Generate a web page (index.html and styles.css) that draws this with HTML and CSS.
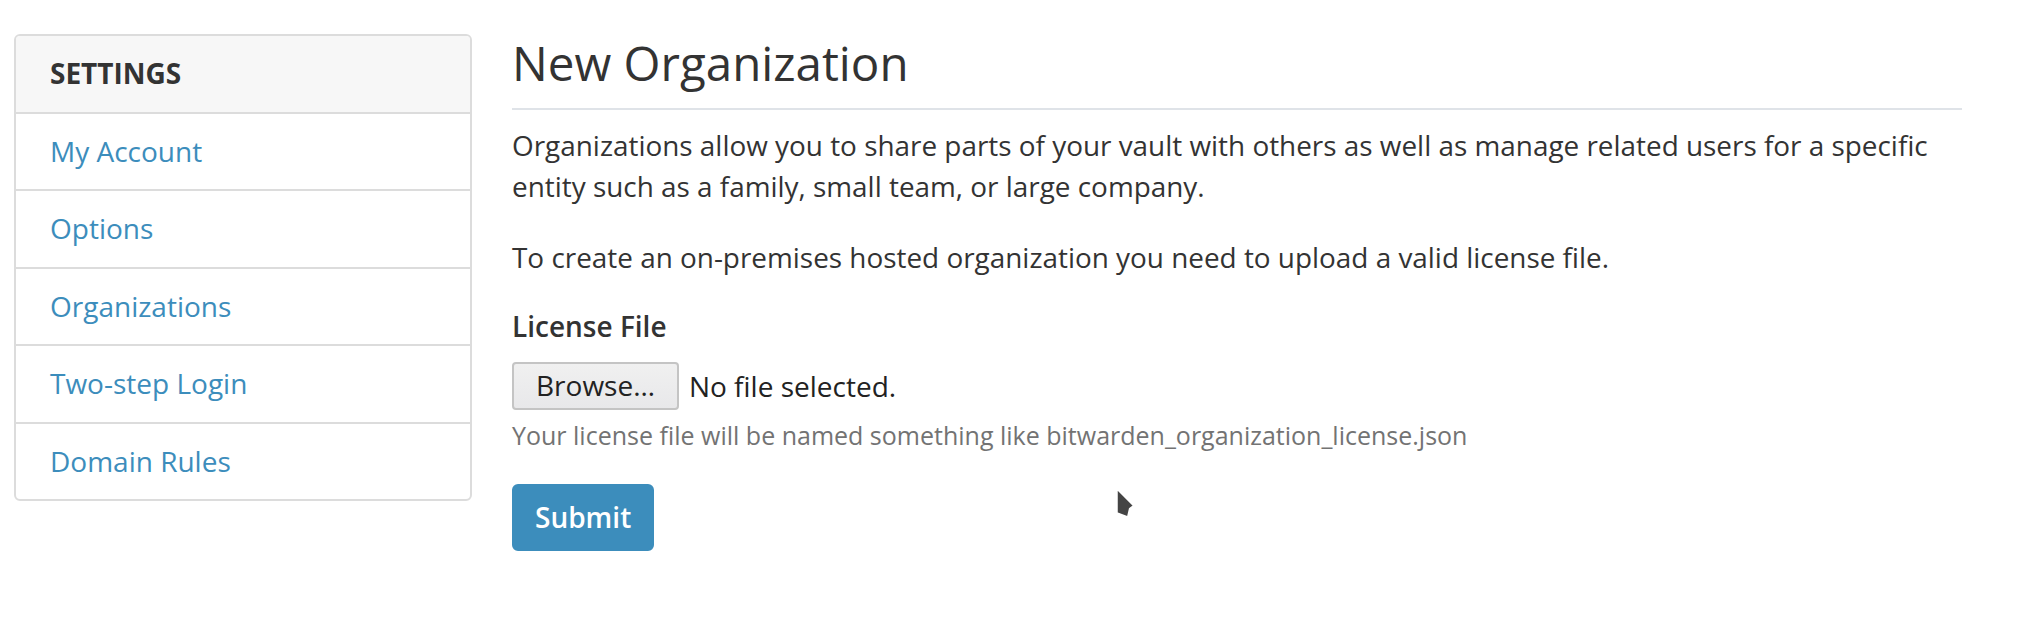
FILE: index.html
```html
<!DOCTYPE html>
<html lang="en">
<head>
<meta charset="utf-8">
<title>New Organization</title>
<link rel="stylesheet" href="styles.css">
</head>
<body>
<div class="page">
  <aside class="sidebar">
    <div class="sidebar-head">SETTINGS</div>
    <ul class="sidebar-list">
      <li class="sidebar-item"><a href="#">My Account</a></li>
      <li class="sidebar-item"><a href="#">Options</a></li>
      <li class="sidebar-item"><a href="#">Organizations</a></li>
      <li class="sidebar-item"><a href="#">Two-step Login</a></li>
      <li class="sidebar-item"><a href="#">Domain Rules</a></li>
    </ul>
  </aside>
  <main class="main">
    <h1 class="page-title">New Organization</h1>
    <p class="lead-text">Organizations allow you to share parts of your vault with others as well as manage related users for a specific entity such as a family, small team, or large company.</p>
    <p class="lead-text second">To create an on-premises hosted organization you need to upload a valid license file.</p>
    <form class="form">
      <div class="field-label">License File</div>
      <div class="file-row">
        <button type="button" class="browse">Browse…</button>
        <span class="file-status">No file selected.</span>
      </div>
      <div class="help">Your license file will be named something like bitwarden_organization_license.json</div>
      <button type="button" class="submit">Submit</button>
    </form>
  </main>
</div>
<svg class="cursor" width="22" height="34" viewBox="-2 -2 22 34" aria-hidden="true">
  <polygon points="0,0 16.7,16.7 12.7,19.5 10.7,28 0,24" fill="#444" stroke="#fff" stroke-width="1.5" stroke-linejoin="round"/>
</svg>
</body>
</html>
```

FILE: styles.css
```css
html, body {
  margin: 0;
  padding: 0;
  background: #fff;
}

body {
  font-family: "Open Sans", "Liberation Sans", sans-serif;
  font-size: 28px;
  color: #333;
}

.page {
  display: flex;
  align-items: flex-start;
  gap: 40px;
  padding: 34px 0 0 14px;
}

.sidebar {
  width: 458px;
  flex: none;
  box-sizing: border-box;
  border: 2px solid #dcdcdc;
  border-radius: 6px;
  overflow: hidden;
}

.sidebar-head {
  background: #f7f7f7;
  border-bottom: 2px solid #dcdcdc;
  padding: 18px 34px;
  line-height: 39.5px;
  font-weight: 700;
  color: #333;
}

.sidebar-list {
  list-style: none;
  margin: 0;
  padding: 0;
}

.sidebar-item {
  padding: 18px 34px;
  line-height: 39.5px;
  border-bottom: 2px solid #dcdcdc;
}

.sidebar-item:last-child {
  border-bottom: none;
}

.sidebar-item a {
  color: #3c8dbc;
  text-decoration: none;
}

.main {
  width: 1450px;
  flex: none;
}

.page-title {
  margin: 3px 0 0;
  padding-bottom: 18px;
  font-size: 47.5px;
  font-weight: 400;
  line-height: 52.8px;
  color: #333;
  border-bottom: 2px solid #dfe3e8;
}

.lead-text {
  margin: 15px 0 31px;
  line-height: 40.7px;
  font-size: 27.9px;
}

.lead-text.second {
  margin: 0 0 28px;
}

.form {
  margin: 0;
}

.field-label {
  font-weight: 600;
  line-height: 40.7px;
  margin-bottom: 15.5px;
}

.file-row {
  display: flex;
  align-items: center;
  gap: 10px;
}

.browse {
  font-family: "Open Sans", "Liberation Sans", sans-serif;
  font-size: 28px;
  color: #222;
  background: linear-gradient(#f0f0f0, #e8e8ea);
  border: 2px solid #c4c4c4;
  border-radius: 4px;
  padding: 1px 22px 3px;
  line-height: 40px;
  margin: 0;
}

.file-status {
  color: #222;
  line-height: 40px;
}

.help {
  margin-top: 5px;
  font-size: 25px;
  line-height: 40.7px;
  color: #737373;
}

.submit {
  margin-top: 28px;
  font-family: "Open Sans", "Liberation Sans", sans-serif;
  font-size: 28px;
  font-weight: 600;
  color: #fff;
  background: #3c8dbc;
  border: 2px solid #3c8dbc;
  border-radius: 6px;
  padding: 11.5px 21px;
  line-height: 40px;
}

.cursor {
  position: absolute;
  left: 1115px;
  top: 487px;
}
```
